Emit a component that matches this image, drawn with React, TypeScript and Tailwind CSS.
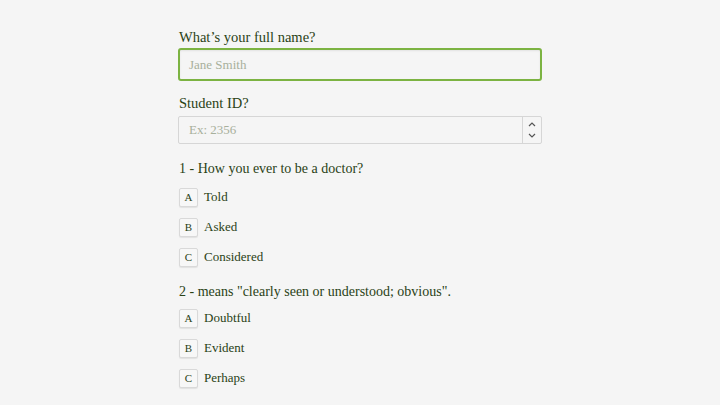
import React from "react";

const font = { fontFamily: '"Liberation Serif", "Times New Roman", serif' };

function Option({ letter, text }: { letter: string; text: string }) {
  return (
    <div className="flex items-center h-[30px]">
      <div className="w-[19px] h-[19px] border border-[#d9d9d9] rounded-[2px] bg-[#f7f7f7] flex items-center justify-center text-[11px] text-[#2a4216] shadow-[0_1px_1px_rgba(0,0,0,0.08)]">
        {letter}
      </div>
      <span className="ml-[6px] text-[13px] text-[#2a4216]">{text}</span>
    </div>
  );
}

export default function App() {
  return (
    <div className="w-[720px] h-[405px] bg-[#f5f5f5] overflow-hidden" style={font}>
      <div className="w-[364px] ml-[178px] pt-[27px] flex flex-col">
        <label className="text-[14.5px] text-[#2a4216] leading-[20px] ml-[1px]">What’s your full name?</label>
        <div className="mt-[1px] h-[33px] border-2 border-[#7cb342] rounded-[3px] bg-[#f5f5f5] flex items-center px-[9px] shadow-[inset_0_1px_2px_rgba(0,0,0,0.08)]">
          <span className="text-[13px] text-[#a8b09c]">Jane Smith</span>
        </div>
        <label className="mt-[12px] text-[14.5px] text-[#2a4216] leading-[20px] ml-[1px]">Student ID?</label>
        <div className="mt-[3px] h-[28px] border border-[#d6d6d6] rounded-[2px] bg-[#f5f5f5] flex items-center">
          <span className="flex-1 px-[10px] text-[13px] text-[#a8b09c]">Ex: 2356</span>
          <div className="w-[19px] h-full border-l border-[#d6d6d6] flex flex-col items-center justify-between py-[5px]">
            <svg width="8" height="5" viewBox="0 0 8 5"><path d="M1 4 L4 1 L7 4" fill="none" stroke="#555" strokeWidth="1.2" /></svg>
            <svg width="8" height="5" viewBox="0 0 8 5"><path d="M1 1 L4 4 L7 1" fill="none" stroke="#555" strokeWidth="1.2" /></svg>
          </div>
        </div>
        <div className="mt-[15px] text-[14px] text-[#2a4216] leading-[20px] ml-[1px]">1 - How you ever to be a doctor?</div>
        <div className="mt-[3px] ml-[1px] flex flex-col">
          <Option letter="A" text="Told" />
          <Option letter="B" text="Asked" />
          <Option letter="C" text="Considered" />
        </div>
        <div className="mt-[10px] text-[14px] text-[#2a4216] leading-[20px] ml-[1px]">2 - means "clearly seen or understood; obvious".</div>
        <div className="mt-[1px] ml-[1px] flex flex-col">
          <Option letter="A" text="Doubtful" />
          <Option letter="B" text="Evident" />
          <Option letter="C" text="Perhaps" />
        </div>
      </div>
    </div>
  );
}
